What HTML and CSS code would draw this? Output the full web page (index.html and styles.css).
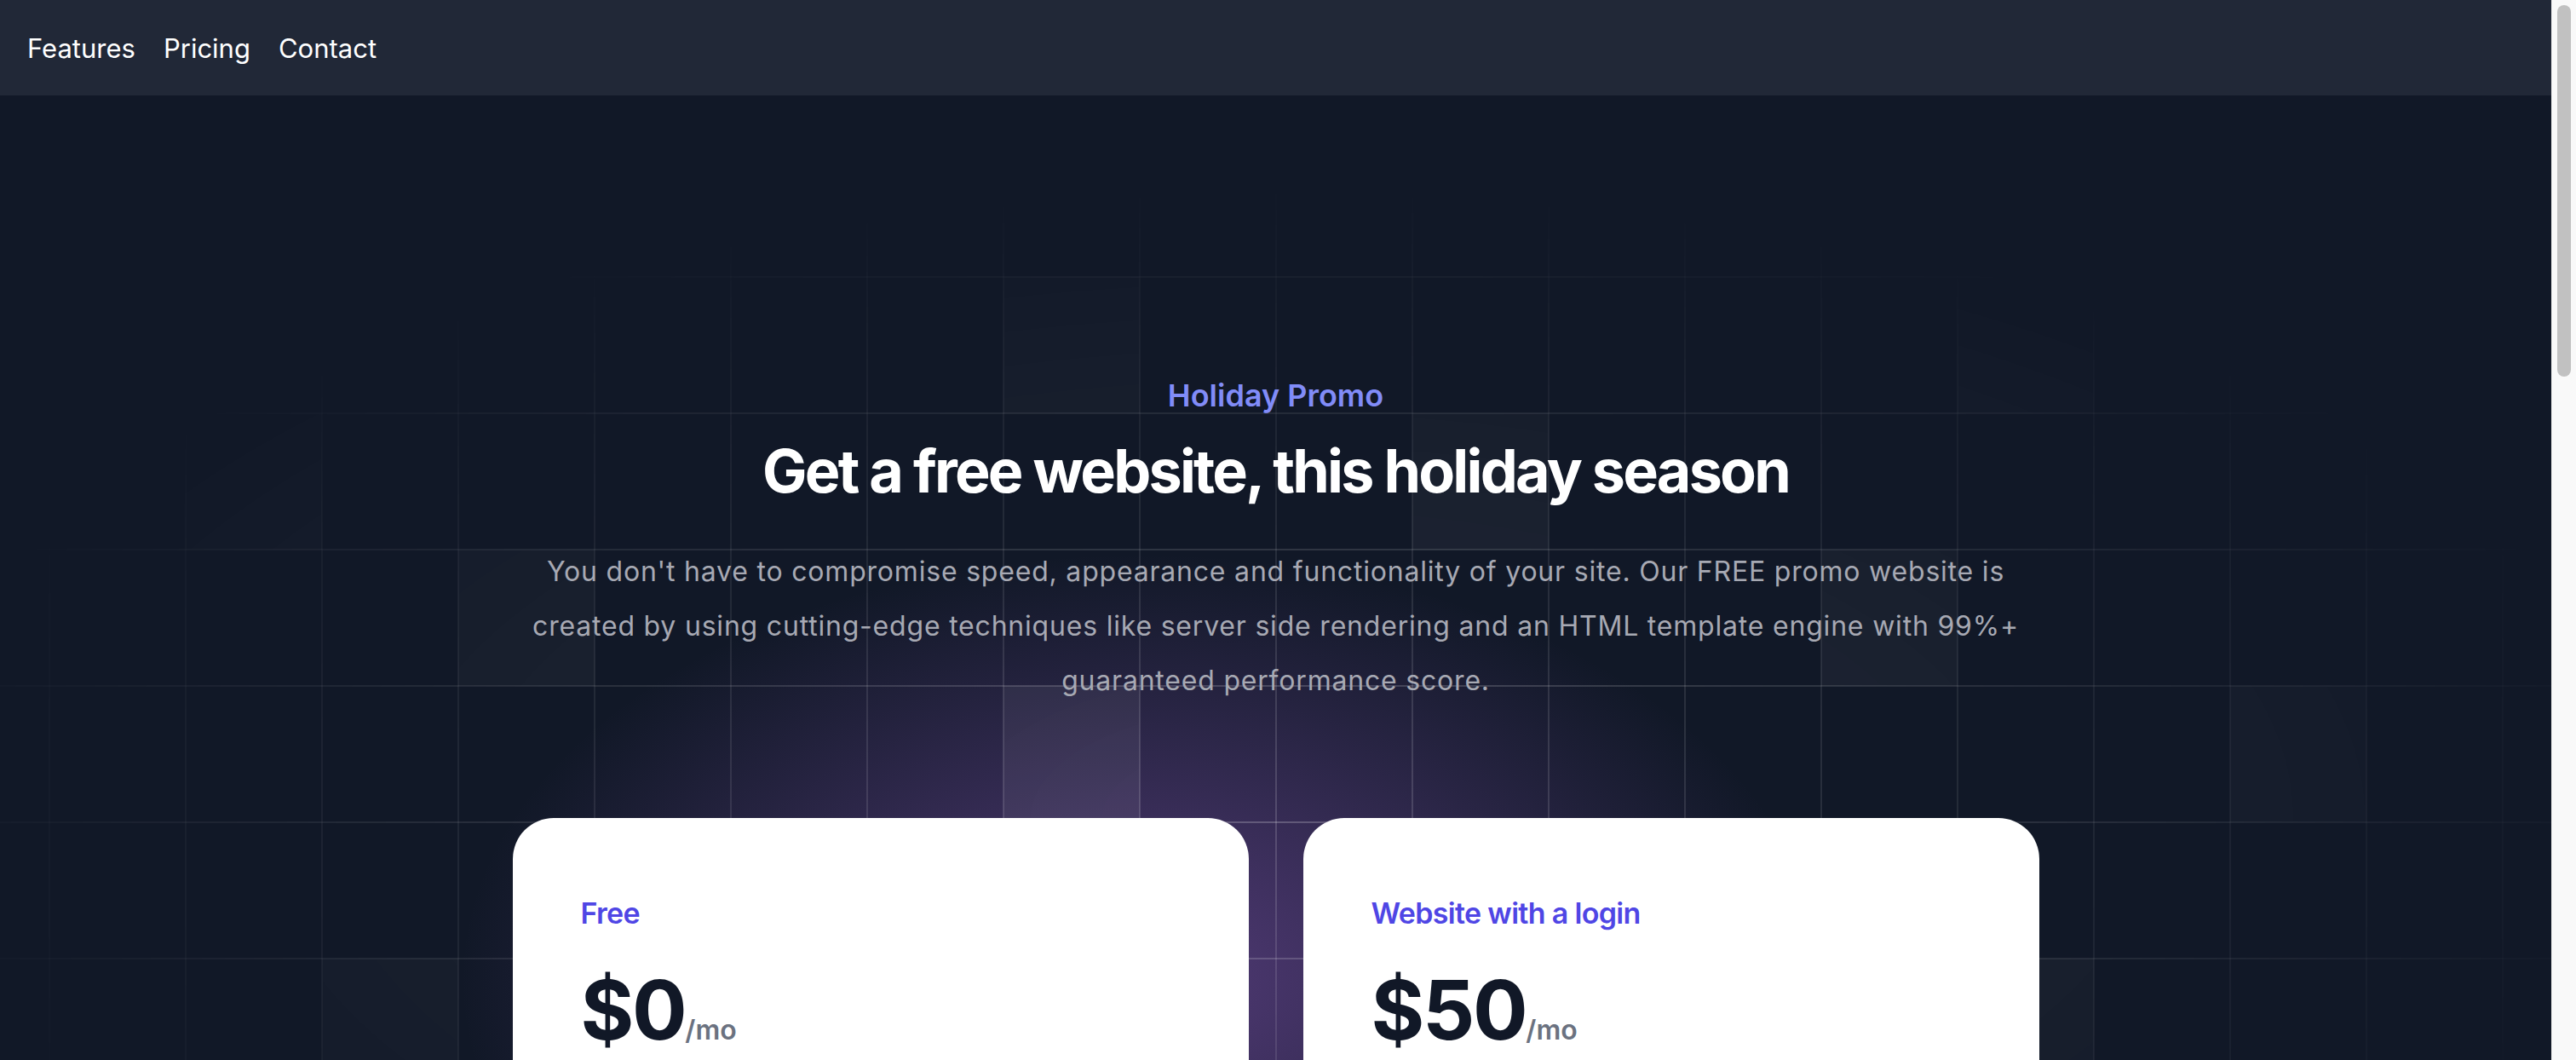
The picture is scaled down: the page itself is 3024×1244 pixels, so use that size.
FILE: index.html
```html
<!DOCTYPE html>
<html lang="en">
<head>
<meta charset="utf-8">
<title>Holiday Promo</title>
<link rel="stylesheet" href="styles.css">
</head>
<body>
<div class="frame">
  <div class="page">
    <nav class="topnav">
      <a href="#features">Features</a>
      <a href="#pricing">Pricing</a>
      <a href="#contact">Contact</a>
    </nav>
    <main class="hero">
      <svg class="grid" aria-hidden="true">
        <defs>
          <pattern id="gridcell" width="160" height="160" x="57" y="52" patternUnits="userSpaceOnUse">
            <path class="hline" d="M0 1H160" />
            <path class="vline" d="M1 0V160" />
          </pattern>
        </defs>
        <g class="cells">
          <rect x="1178" y="213" width="160" height="160" />
          <rect x="1658" y="373" width="160" height="160" />
          <rect x="538" y="533" width="160" height="160" />
          <rect x="2138" y="533" width="160" height="160" />
          <rect x="2298" y="213" width="160" height="160" />
          <rect x="2618" y="693" width="160" height="160" />
          <rect x="218" y="373" width="160" height="160" />
          <rect x="378" y="1013" width="160" height="160" />
          <rect x="2298" y="1013" width="160" height="160" />
          <rect x="1178" y="693" width="160" height="160" />
        </g>
        <rect width="100%" height="100%" fill="url(#gridcell)" />
      </svg>
      <div class="hero-inner">
        <h2 class="eyebrow">Holiday Promo</h2>
        <h1 class="title">Get a free website, this holiday season</h1>
        <p class="lead">You don't have to compromise speed, appearance and functionality of your site. Our FREE promo website is created by using cutting-edge techniques like server side rendering and an HTML template engine with 99%+ guaranteed performance score.</p>
        <div class="plans">
          <section class="plan">
            <h3 class="plan-name">Free</h3>
            <p class="price"><span class="amount">$0</span><span class="per">/mo</span></p>
            <ul class="perks">
              <li>One page website</li>
              <li>Server side rendering</li>
              <li>99%+ performance score</li>
            </ul>
          </section>
          <section class="plan">
            <h3 class="plan-name">Website with a login</h3>
            <p class="price"><span class="amount">$50</span><span class="per">/mo</span></p>
            <ul class="perks">
              <li>Everything in Free</li>
              <li>User accounts and login</li>
              <li>Priority support</li>
            </ul>
          </section>
        </div>
      </div>
    </main>
  </div>
  <div class="scrollbar"><div class="thumb"></div></div>
</div>
</body>
</html>
```

FILE: styles.css
```css
html, body {
  margin: 0;
  padding: 0;
  height: 100%;
}

body {
  font-family: Inter, "Noto Sans", "Liberation Sans", sans-serif;
  background: #111827;
  overflow: hidden;
}

.frame {
  display: flex;
  height: 1244px;
  overflow: hidden;
}

.page {
  flex: 1;
  min-width: 0;
  display: flex;
  flex-direction: column;
  overflow: hidden;
  background: #111827;
}

.topnav {
  flex: none;
  height: 112px;
  display: flex;
  align-items: center;
  gap: 33px;
  padding: 2px 32px 0;
  box-sizing: border-box;
  background: #212837;
}

.topnav a {
  color: #ffffff;
  text-decoration: none;
  font-size: 31px;
  line-height: 48px;
}

.hero {
  position: relative;
  flex: none;
  min-height: 1436px;
  background:
    radial-gradient(800px 500px at 1340px 1038px, rgba(160, 100, 215, 0.45), rgba(160, 100, 215, 0)),
    #111827;
}

.grid {
  position: absolute;
  top: 0;
  left: 0;
  width: 100%;
  height: 1436px;
  -webkit-mask-image: radial-gradient(1650px 760px at 1498px 848px, #000, transparent);
  mask-image: radial-gradient(1650px 760px at 1498px 848px, #000, transparent);
}

.grid .hline {
  fill: none;
  stroke: rgba(255, 255, 255, 0.22);
  stroke-width: 2;
}

.grid .vline {
  fill: none;
  stroke: rgba(255, 255, 255, 0.16);
  stroke-width: 2;
}

.grid .cells rect {
  fill: rgba(255, 255, 255, 0.08);
}

.hero-inner {
  position: relative;
  padding-top: 324px;
  text-align: center;
}

.eyebrow {
  margin: 0;
  font-size: 36px;
  line-height: 56px;
  font-weight: 600;
  color: #818cf8;
}

.title {
  margin: 21px 0 0;
  font-size: 70px;
  line-height: 80px;
  font-weight: 700;
  letter-spacing: -0.04em;
  color: #ffffff;
}

.lead {
  margin: 46px auto 0;
  max-width: 1792px;
  font-size: 32px;
  line-height: 64px;
  letter-spacing: 0.8px;
  color: #a7a9b3;
}

.plans {
  margin: 129px auto 0;
  max-width: 1792px;
  display: grid;
  grid-template-columns: 1fr 1fr;
  gap: 64px;
  text-align: left;
}

.plan {
  background: #ffffff;
  border-radius: 48px;
  padding: 80px;
  min-height: 900px;
}

.plan-name {
  margin: 0;
  font-size: 34px;
  line-height: 64px;
  font-weight: 600;
  letter-spacing: -0.02em;
  color: #4f46e5;
}

.price {
  margin: 33px 0 0;
  display: flex;
  align-items: baseline;
}

.amount {
  font-size: 96px;
  line-height: 96px;
  font-weight: 700;
  letter-spacing: -0.025em;
  color: #111827;
}

.per {
  font-size: 32px;
  line-height: 48px;
  font-weight: 600;
  color: #6b7280;
}

.perks {
  margin: 80px 0 0;
  padding: 0;
  list-style: none;
  font-size: 32px;
  line-height: 56px;
  color: #4b5563;
}

.scrollbar {
  flex: none;
  width: 29px;
  box-sizing: border-box;
  padding: 6px 0 0 6px;
  background: #f9f9f9;
  border-left: 1px solid #ececec;
}

.thumb {
  width: 16px;
  height: 436px;
  border-radius: 8px;
  background: #c1c1c1;
}
```
